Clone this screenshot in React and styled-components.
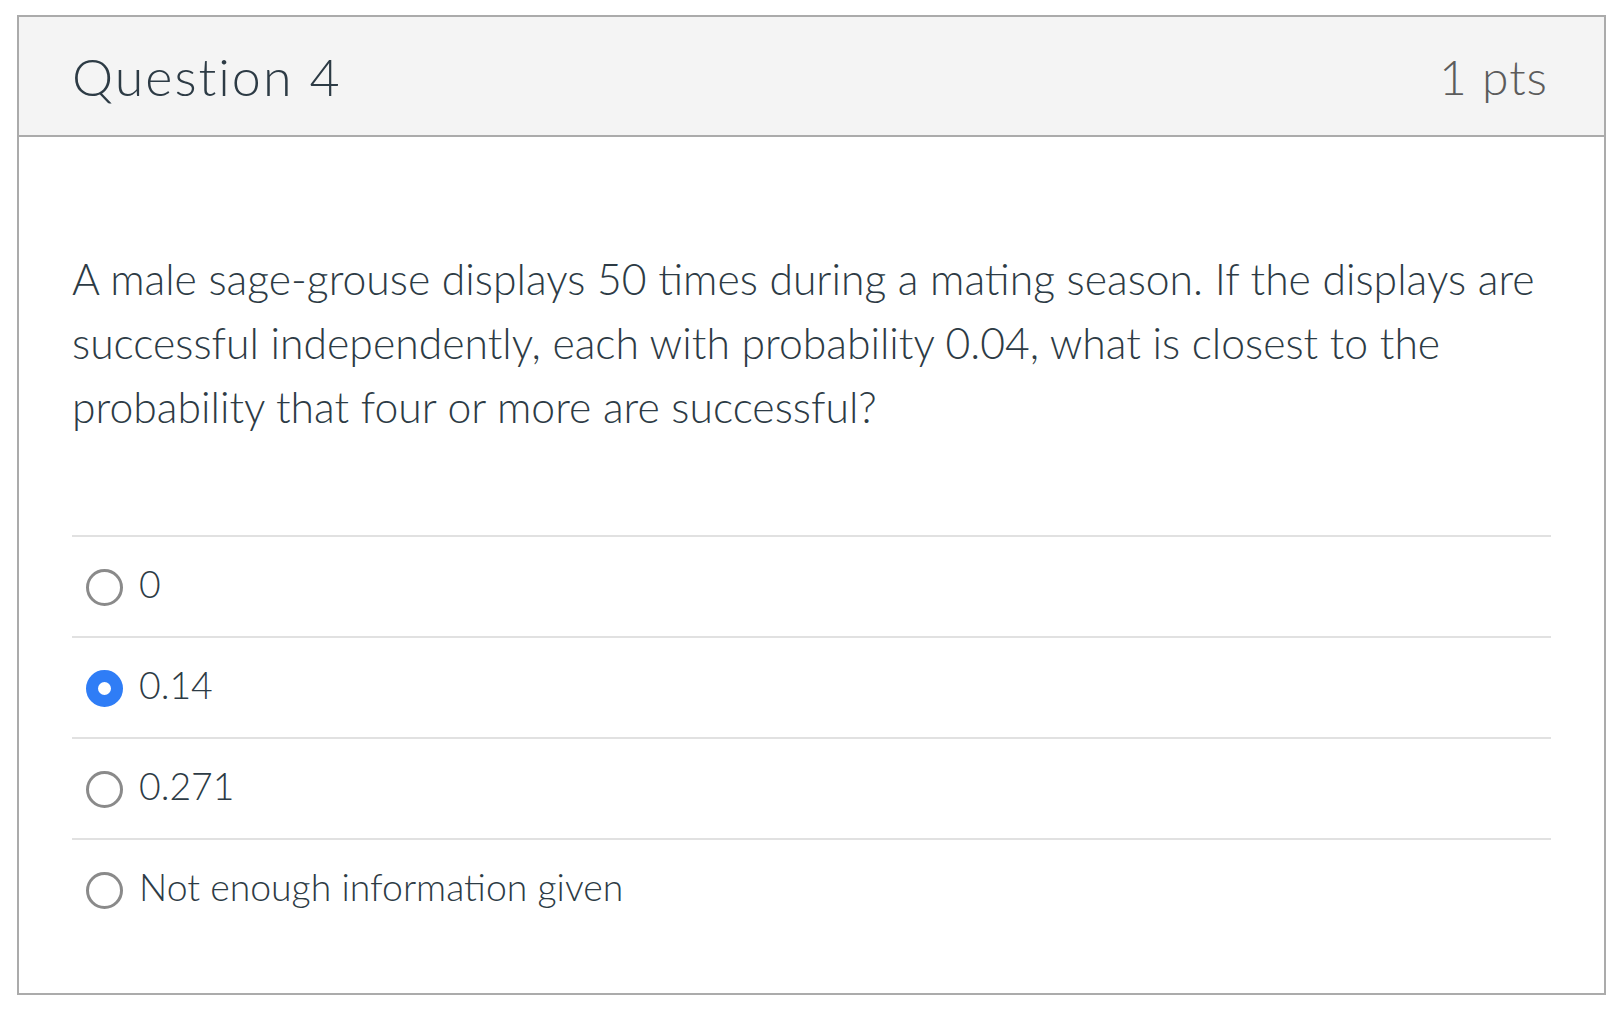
import React from "react";
import styled, { createGlobalStyle } from "styled-components";

const GlobalStyle = createGlobalStyle`
    body {
        margin: 0;
        background: #ffffff;
        font-family: "Lato Light", Lato, "Open Sans", sans-serif;
    }
`

const Page = styled.div`
    padding: 15px 15px 20px 17px;
`

const Card = styled.div`
    width: 1589px;
    box-sizing: border-box;
    border: 2px solid #ababab;
`

const Header = styled.div`
    height: 118px;
    background: #f4f4f4;
    border-bottom: 2px solid #ababab;
    display: flex;
    align-items: center;
    justify-content: space-between;
    padding: 0 56px 0 53px;
`

const Title = styled.h2`
    margin: 0;
    font-weight: 300;
    font-size: 52px;
    color: #2d3b45;
    letter-spacing: 2px;
`

const Points = styled.span`
    font-weight: 300;
    font-size: 48px;
    color: #5c5c5c;
    letter-spacing: 1px;
`

const Body = styled.div`
    padding: 110px 53px 54px 53px;
`

const Prompt = styled.p`
    margin: 0 0 96px 0;
    font-weight: 300;
    font-size: 42.7px;
    line-height: 64px;
    color: #2d3b45;
`

const Answer = styled.label`
    display: flex;
    align-items: center;
    gap: 16px;
    height: 101px;
    box-sizing: border-box;
    padding: 0 0 6px 14px;
    border-top: 2px solid #e1e1e1;
    font-weight: 300;
    font-size: 37.4px;
    color: #2d3b45;
`

const Radio = styled.span`
    width: 37px;
    height: 37px;
    box-sizing: border-box;
    border-radius: 50%;
    flex-shrink: 0;
    margin-top: 8px;
    border: ${p => (p.checked ? "12px solid #2f7df6" : "3.5px solid #8a8a8a")};
    background: #ffffff;
`

const answers = ["0", "0.14", "0.271", "Not enough information given"];

const App = () => {
    return (
        <Page>
            <GlobalStyle />
            <Card>
                <Header>
                    <Title>Question 4</Title>
                    <Points>1 pts</Points>
                </Header>
                <Body>
                    <Prompt>
                        A male sage-grouse displays 50 times during a mating season. If the displays are
                        successful independently, each with probability 0.04, what is closest to the
                        probability that four or more are successful?
                    </Prompt>
                    {answers.map((a, i) => (
                        <Answer key={a}>
                            <Radio checked={i === 1} />
                            {a}
                        </Answer>
                    ))}
                </Body>
            </Card>
        </Page>
    )
}

export default App;
